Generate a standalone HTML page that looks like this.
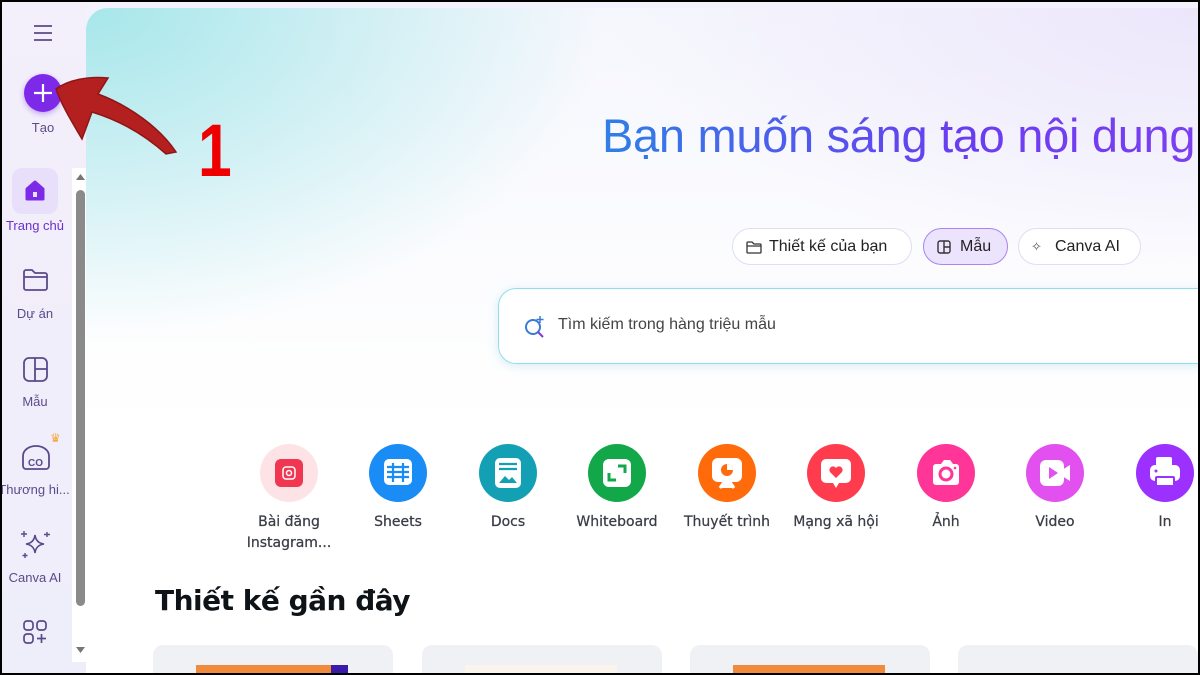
<!DOCTYPE html>
<html><head><meta charset="utf-8"><style>
*{margin:0;padding:0;box-sizing:border-box}
body{width:1200px;height:675px;overflow:hidden;background:#000;font-family:"Liberation Sans","DejaVu Sans",sans-serif;position:relative}
#frame{position:absolute;left:2px;top:2px;width:1196px;height:671px;background:#f3f1fb;overflow:hidden}
#side{position:absolute;left:0;top:0;width:84px;height:671px;background:linear-gradient(#f3effb,#eeeefa)}
.nav{position:absolute;left:0;width:64px;text-align:center;font-size:13px;color:#5b4a8a}
#main{position:absolute;left:84px;top:6px;width:1120px;height:680px;border-radius:22px 0 0 0;overflow:hidden;background:#fff}
#grad{position:absolute;left:0;top:0;width:100%;height:420px;background:radial-gradient(ellipse 520px 330px at 0 0,#a6e7ea 0%,rgba(166,231,234,0) 100%),radial-gradient(ellipse 600px 260px at 100% 0,#ece6fb 0%,rgba(236,230,251,0) 100%),linear-gradient(#f6f7fd,#fff)}
h1{position:absolute;left:516px;top:100px;font-size:47px;font-weight:400;white-space:nowrap;background:linear-gradient(90deg,#2f7fe6,#6a3df0 60%,#7b3ff0);-webkit-background-clip:text;color:transparent;font-family:"Liberation Sans",sans-serif;letter-spacing:-.3px}
.pill{position:absolute;top:220px;height:37px;border:1px solid #e2dcf4;border-radius:19px;background:#fff;font-size:16px;color:#222;line-height:35px;padding-left:36px;font-family:"Liberation Sans",sans-serif}
#search{position:absolute;left:412px;top:280px;width:720px;height:76px;border-radius:18px;border:1.5px solid #8fe0ea;border-right-color:#b4a4f4;background:#fff;box-shadow:0 2px 10px rgba(140,200,230,.35)}
.ic{position:absolute;top:436px;width:58px;height:58px;border-radius:50%}
.lb{position:absolute;top:504px;width:110px;text-align:center;font-size:14px;color:#3a3d46;font-family:"DejaVu Sans",sans-serif;line-height:21px;-webkit-text-stroke:.25px #3a3d46}
h2{position:absolute;left:69px;top:576px;font-size:28px;font-weight:700;color:#0e1318;font-family:"DejaVu Sans",sans-serif;letter-spacing:-.5px}
.card{position:absolute;top:637px;width:240px;height:60px;background:#f0f1f4;border-radius:10px}
</style></head><body><div id="frame">
<div id="side">
 <svg style="position:absolute;left:31px;top:22px" width="20" height="18"><path d="M1 2h18M1 9h18M1 16h18" stroke="#5b4a8a" stroke-width="1.8"/></svg>
 <div style="position:absolute;left:22px;top:72px;width:38px;height:38px;border-radius:50%;background:#7d2ae8;box-shadow:0 2px 6px rgba(125,42,232,.4)"><svg width="38" height="38"><path d="M19 10v18M10 19h18" stroke="#fff" stroke-width="2.2"/></svg></div>
 <div class="nav" style="left:9px;top:118px">Tạo</div>
 <div style="position:absolute;left:10px;top:166px;width:46px;height:46px;border-radius:10px;background:#e8e0fb"><svg width="46" height="46"><path d="M15 21l8-7 8 7v10h-16z" fill="#7d2ae8" stroke="#7d2ae8" stroke-width="3" stroke-linejoin="round"/><rect x="21" y="24" width="4" height="5" fill="#e8e0fb"/></svg></div>
 <div class="nav" style="left:0;width:66px;top:216px;color:#6d2fd0">Trang chủ</div>
 <svg style="position:absolute;left:20px;top:265px" width="28" height="26"><path d="M2 5a2 2 0 0 1 2-2h6l3 3h10a2 2 0 0 1 2 2v13a2 2 0 0 1-2 2H4a2 2 0 0 1-2-2zM2 10h23" fill="none" stroke="#5b4a8a" stroke-width="1.8"/></svg>
 <div class="nav" style="left:1px;top:304px">Dự án</div>
 <svg style="position:absolute;left:20px;top:354px" width="28" height="28"><rect x="2" y="2" width="23" height="23" rx="5" fill="none" stroke="#5b4a8a" stroke-width="1.8"/><path d="M13 2v23M13 13h12" stroke="#5b4a8a" stroke-width="1.8"/></svg>
 <div class="nav" style="left:1px;top:392px">Mẫu</div>
 <svg style="position:absolute;left:18px;top:440px" width="32" height="30"><path d="M3 14c0-6 6-10 13-10s13 4 13 10v10a3 3 0 0 1-3 3H6a3 3 0 0 1-3-3z" fill="none" stroke="#5b4a8a" stroke-width="1.8"/><text x="8" y="24" font-size="10" font-weight="700" fill="#5b4a8a" font-family="Liberation Sans">CO</text></svg>
 <div style="position:absolute;left:48px;top:429px;color:#f3a93a;font-size:12px">♛</div>
 <div class="nav" style="left:-8px;width:80px;top:480px">Thương hi...</div>
 <svg style="position:absolute;left:16px;top:527px" width="34" height="32"><path d="M17 6q1 8 9 9q-8 1-9 9q-1-8-9-9q8-1 9-9z" fill="none" stroke="#5b4a8a" stroke-width="1.6"/><path d="M6 2v6M3 5h6M29 3v5M26 5.5h6M7 24v5M4.5 26.5h5" stroke="#5b4a8a" stroke-width="1.4"/></svg>
 <div class="nav" style="left:1px;top:568px">Canva AI</div>
 <svg style="position:absolute;left:20px;top:617px" width="28" height="28"><rect x="2" y="2" width="9" height="9" rx="3" fill="none" stroke="#5b4a8a" stroke-width="1.7"/><rect x="15" y="2" width="9" height="9" rx="3" fill="none" stroke="#5b4a8a" stroke-width="1.7"/><rect x="2" y="15" width="9" height="9" rx="3" fill="none" stroke="#5b4a8a" stroke-width="1.7"/><path d="M19.5 15v9M15 19.5h9" stroke="#5b4a8a" stroke-width="1.7"/></svg>
 <div style="position:absolute;left:70px;top:166px;width:16px;height:494px;background:#fff"></div>
 <svg style="position:absolute;left:73px;top:170px" width="11" height="10"><path d="M1 8L5.5 2L10 8z" fill="#777"/></svg>
 <div style="position:absolute;left:74px;top:188px;width:9px;height:416px;border-radius:5px;background:#8a8a8a"></div>
 <svg style="position:absolute;left:73px;top:643px" width="11" height="10"><path d="M1 2L5.5 8L10 2z" fill="#777"/></svg>
</div>
<div id="main">
 <div id="grad"></div>
 <h1>Bạn muốn sáng tạo nội dung</h1>
 <div class="pill" style="left:646px;width:180px"><svg style="position:absolute;left:13px;top:11px" width="16" height="14"><path d="M1 3a1 1 0 0 1 1-1h4l2 2h6a1 1 0 0 1 1 1v7a1 1 0 0 1-1 1H2a1 1 0 0 1-1-1zM1 6h14" fill="none" stroke="#333" stroke-width="1.3"/></svg>Thiết kế của bạn</div>
 <div class="pill" style="left:837px;width:85px;background:#ece3fd;border-color:#a985f0"><svg style="position:absolute;left:13px;top:11px" width="15" height="15"><rect x="1" y="1" width="12" height="12" rx="2" fill="none" stroke="#333" stroke-width="1.4"/><path d="M7 1v12M7 7h6" stroke="#333" stroke-width="1.4"/></svg>Mẫu</div>
 <div class="pill" style="left:932px;width:123px"><span style="position:absolute;left:12px;top:0;font-size:13px;color:#555">✧</span>Canva AI</div>
 <div id="search"><svg style="position:absolute;left:24px;top:25px" width="24" height="26"><circle cx="10" cy="13" r="7" fill="none" stroke="#3a7bd5" stroke-width="2"/><path d="M15 18l5 5" stroke="#7a3ae0" stroke-width="2"/><path d="M17 2v7M13.5 5.5h7" stroke="#3a7bd5" stroke-width="1.5"/></svg><span style="position:absolute;left:59px;top:27px;font-size:16px;color:#444;font-family:'Liberation Sans',sans-serif">Tìm kiếm trong hàng triệu mẫu</span></div>

 <div class="ic" style="left:174px;background:#fde3e6"><div style="position:absolute;left:15px;top:15px;width:28px;height:28px;border-radius:6px;background:#f03651"></div><svg style="position:absolute;left:20px;top:20px" width="18" height="18"><rect x="3" y="3" width="12" height="12" rx="3" fill="none" stroke="#fff" stroke-width="1.5"/><circle cx="9" cy="9" r="2.5" fill="none" stroke="#fff" stroke-width="1.5"/></svg></div>
 <div class="ic" style="left:283px;background:#1a8cf5"><svg width="58" height="58"><rect x="15" y="15" width="28" height="26" rx="5" fill="#fff"/><path d="M18 23h22M18 28h22M18 33h22M24 19v19M34 19v19" stroke="#1a8cf5" stroke-width="2.2"/></svg></div>
 <div class="ic" style="left:393px;background:#13a0b5"><svg width="58" height="58"><rect x="16" y="14" width="26" height="30" rx="5" fill="#fff"/><path d="M20 20h18M20 25h18" stroke="#13a0b5" stroke-width="2.2"/><path d="M20 39l6-7 4 4 3-3 5 6z" fill="#13a0b5"/></svg></div>
 <div class="ic" style="left:502px;background:#12a84a"><svg width="58" height="58"><rect x="15" y="15" width="28" height="28" rx="6" fill="#fff"/><path d="M21 29v7h7M37 29v-7h-7" fill="none" stroke="#12a84a" stroke-width="3"/></svg></div>
 <div class="ic" style="left:612px;background:#ff6a0a"><svg width="58" height="58"><rect x="14" y="14" width="30" height="24" rx="6" fill="#fff"/><path d="M22 44l4-6h6l4 6" fill="#fff" stroke="#fff" stroke-width="3"/><circle cx="29" cy="26" r="6" fill="#ff6a0a"/><path d="M29 26v-6a6 6 0 0 1 6 6z" fill="#fff"/></svg></div>
 <div class="ic" style="left:721px;background:#ff3b4e"><svg width="58" height="58"><path d="M19 15h20a5 5 0 0 1 5 5v14a5 5 0 0 1-5 5h-7l-3 5-3-5h-7a5 5 0 0 1-5-5V20a5 5 0 0 1 5-5z" fill="#fff"/><path d="M29 34l-6-6a3.5 3.5 0 0 1 6-4 3.5 3.5 0 0 1 6 4z" fill="#ff3b4e"/></svg></div>
 <div class="ic" style="left:831px;background:#ff3598"><svg width="58" height="58"><path d="M19 20h5l3-4h6l3 4h3a3 3 0 0 1 3 3v15a3 3 0 0 1-3 3H19a3 3 0 0 1-3-3V23a3 3 0 0 1 3-3z" fill="#fff"/><circle cx="29" cy="30" r="6" fill="none" stroke="#ff3598" stroke-width="3"/><circle cx="38" cy="24" r="1.3" fill="#ff3598"/></svg></div>
 <div class="ic" style="left:940px;background:#e251ef"><svg width="58" height="58"><rect x="14" y="16" width="24" height="26" rx="6" fill="#fff"/><path d="M36 26l8-5v16l-8-5z" fill="#fff"/><path d="M23 23v12l9-6z" fill="#e251ef"/></svg></div>
 <div class="ic" style="left:1050px;background:#9b30ff"><svg width="58" height="58"><rect x="20" y="13" width="16" height="9" rx="2" fill="#fff"/><rect x="14" y="21" width="30" height="16" rx="5" fill="#fff"/><rect x="20" y="33" width="18" height="9" rx="1" fill="#fff" stroke="#9b30ff" stroke-width="2"/><circle cx="20" cy="27" r="1.5" fill="#9b30ff"/></svg></div>

 <div class="lb" style="left:148px">Bài đăng<br>Instagram...</div>
 <div class="lb" style="left:257px">Sheets</div>
 <div class="lb" style="left:367px">Docs</div>
 <div class="lb" style="left:476px">Whiteboard</div>
 <div class="lb" style="left:586px">Thuyết trình</div>
 <div class="lb" style="left:695px">Mạng xã hội</div>
 <div class="lb" style="left:805px">Ảnh</div>
 <div class="lb" style="left:914px">Video</div>
 <div class="lb" style="left:1024px">In</div>

 <h2>Thiết kế gần đây</h2>
 <div class="card" style="left:67px"><div style="position:absolute;left:43px;top:20px;width:152px;height:20px;background:#f08a3c"></div><div style="position:absolute;left:178px;top:20px;width:17px;height:12px;background:#3a1aa8"></div></div>
 <div class="card" style="left:336px"><div style="position:absolute;left:43px;top:20px;width:152px;height:20px;background:#faf4ec"></div></div>
 <div class="card" style="left:604px"><div style="position:absolute;left:43px;top:20px;width:152px;height:20px;background:#f08a3c"></div></div>
 <div class="card" style="left:872px"></div>
</div>
<svg style="position:absolute;left:0;top:0" width="260" height="200"><path d="M54 87C66 78 86 74 106 76L96 92C128 104 158 126 174 150L164 152C142 132 116 118 90 110L80 137C70 120 60 104 54 87Z" fill="#b4201f" stroke="#8e1616" stroke-width="1.5"/><text x="0" y="0" font-size="74" font-weight="700" fill="#ee0000" font-family="Liberation Sans" transform="translate(196 174) scale(0.82 1)">1</text></svg>
</div></body></html>
